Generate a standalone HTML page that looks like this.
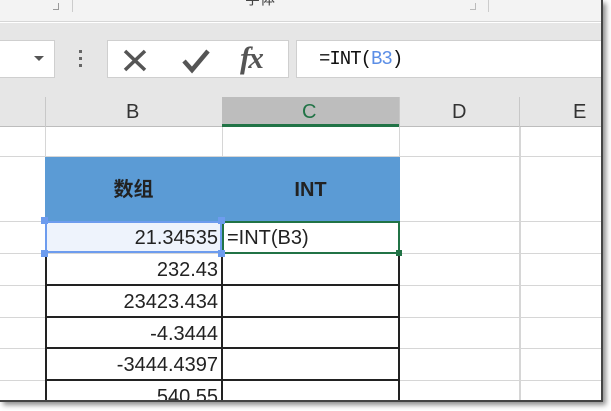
<!DOCTYPE html>
<html><head><meta charset="utf-8"><style>
*{margin:0;padding:0;box-sizing:border-box}
body{width:611px;height:411px;background:#fff;position:relative;overflow:hidden;font-family:"Liberation Sans","Noto Sans CJK SC",sans-serif}
.a{position:absolute;line-height:1.15}
</style></head><body>
<div class="a" style="left:0;top:0;width:603px;height:402px;background:#fff;border-right:2px solid #444;border-bottom:2px solid #444;box-shadow:3px 3px 5px rgba(0,0,0,.45);overflow:hidden">
 <div class="a" style="left:0;top:0;width:603px;height:22px;background:#f3f3f3;border-bottom:1px solid #d6d6d6"></div>
 <div class="a" style="left:245px;top:-9px;font-size:15px;color:#444">字体</div>
 <div class="a" style="left:53px;top:3px;width:6px;height:7px;border-right:1px solid #999;border-bottom:1px solid #999"></div>
 <div class="a" style="left:72px;top:0;width:1px;height:12px;background:#ccc"></div>
 <div class="a" style="left:470px;top:3px;width:6px;height:7px;border-right:1px solid #bbb;border-bottom:1px solid #bbb"></div>
 <div class="a" style="left:488px;top:0;width:1px;height:12px;background:#ccc"></div>
 <div class="a" style="left:0;top:23px;width:603px;height:74px;background:#e6e6e6"></div>
 <div class="a" style="left:0;top:40px;width:55px;height:38px;background:#fff;border:1px solid #cfcfcf;border-left:none"></div>
 <div class="a" style="left:34px;top:56px;width:0;height:0;border-left:5px solid transparent;border-right:5px solid transparent;border-top:5px solid #555"></div>
 <div class="a" style="left:79px;top:50px;width:3px;height:3px;background:#666"></div>
 <div class="a" style="left:79px;top:57px;width:3px;height:3px;background:#666"></div>
 <div class="a" style="left:79px;top:64px;width:3px;height:3px;background:#666"></div>
 <div class="a" style="left:107px;top:40px;width:182px;height:38px;background:#fff;border:1px solid #cfcfcf"></div>
 <svg class="a" style="left:120px;top:46px" width="160" height="30"><path d="M5 5 L25 24 M25 5 L5 24" stroke="#555" stroke-width="3.5" fill="none"/><path d="M64 15 L72 24 L88 5" stroke="#555" stroke-width="4.5" fill="none"/></svg>
 <div class="a" style="left:240px;top:40px;font-family:'Liberation Serif',serif;font-style:italic;font-weight:bold;font-size:31px;color:#555;letter-spacing:-2px">fx</div>
 <div class="a" style="left:296px;top:40px;width:307px;height:38px;background:#fff;border:1px solid #cfcfcf;border-right:none"></div>
 <div class="a" style="left:319px;top:49px;font-family:'Liberation Mono',monospace;font-size:19px;color:#111;letter-spacing:-1px">=INT(<span style="color:#5b8ee6">B3</span>)</div>
 <div class="a" style="left:0;top:97px;width:603px;height:30px;background:#e6e6e6;border-bottom:1px solid #bdbdbd"></div>
 <div class="a" style="left:222px;top:97px;width:177px;height:30px;background:#bdbdbd;border-bottom:3px solid #217346"></div>
 <div class="a" style="left:45px;top:97px;width:1px;height:30px;background:#c8c8c8"></div>
 <div class="a" style="left:399px;top:97px;width:1px;height:30px;background:#c8c8c8"></div>
 <div class="a" style="left:519px;top:97px;width:1px;height:30px;background:#c8c8c8"></div>
 <div class="a" style="left:126px;top:101px;font-size:20px;color:#333">B</div>
 <div class="a" style="left:302px;top:101px;font-size:20px;color:#217346">C</div>
 <div class="a" style="left:452px;top:101px;font-size:20px;color:#333">D</div>
 <div class="a" style="left:573px;top:101px;font-size:20px;color:#333">E</div>
 <div class="a" style="left:45px;top:127px;width:1px;height:280px;background:#d6d6d6"></div>
 <div class="a" style="left:222px;top:127px;width:1px;height:280px;background:#d6d6d6"></div>
 <div class="a" style="left:399px;top:127px;width:1px;height:280px;background:#d6d6d6"></div>
 <div class="a" style="left:519px;top:127px;width:2px;height:280px;background:#d6d6d6"></div>
 <div class="a" style="left:0;top:156px;width:603px;height:1px;background:#d6d6d6"></div>
 <div class="a" style="left:0;top:221px;width:603px;height:1px;background:#d6d6d6"></div>
 <div class="a" style="left:0;top:253px;width:603px;height:1px;background:#d6d6d6"></div>
 <div class="a" style="left:0;top:285px;width:603px;height:1px;background:#d6d6d6"></div>
 <div class="a" style="left:0;top:317px;width:603px;height:1px;background:#d6d6d6"></div>
 <div class="a" style="left:0;top:348px;width:603px;height:1px;background:#d6d6d6"></div>
 <div class="a" style="left:0;top:380px;width:603px;height:1px;background:#d6d6d6"></div>
 <div class="a" style="left:45px;top:157px;width:355px;height:64px;background:#5b9bd5"></div>
 <div class="a" style="left:45px;top:178px;width:177px;height:24px;line-height:24px;text-align:center;font-size:20px;font-weight:bold;color:#222">数组</div>
 <div class="a" style="left:222px;top:178px;width:177px;height:24px;line-height:24px;text-align:center;font-size:20px;font-weight:bold;color:#222">INT</div>
 <div class="a" style="left:45px;top:253px;width:355px;height:150px;border-left:2px solid #222;border-right:2px solid #222"></div>
 <div class="a" style="left:221px;top:253px;width:2px;height:150px;background:#222"></div>
 <div class="a" style="left:45px;top:284px;width:355px;height:2px;background:#222"></div>
 <div class="a" style="left:45px;top:316px;width:355px;height:2px;background:#222"></div>
 <div class="a" style="left:45px;top:347px;width:355px;height:2px;background:#222"></div>
 <div class="a" style="left:45px;top:379px;width:355px;height:2px;background:#222"></div>
 <div class="a" style="left:45px;top:221px;width:177px;height:32px;background:#eef3fc;border:2px solid #6d9cee"></div>
 <div class="a" style="left:222px;top:221px;width:178px;height:33px;border:2px solid #217346"></div>
 <div class="a" style="left:41px;top:217px;width:7px;height:7px;background:#6d9cee"></div>
 <div class="a" style="left:218px;top:217px;width:7px;height:7px;background:#6d9cee"></div>
 <div class="a" style="left:41px;top:250px;width:7px;height:7px;background:#6d9cee"></div>
 <div class="a" style="left:218px;top:250px;width:7px;height:7px;background:#6d9cee"></div>
 <div class="a" style="left:396px;top:250px;width:6px;height:6px;background:#217346"></div>
 <div class="a" style="left:46px;top:227px;width:172px;text-align:right;font-size:20px;color:#222">21.34535</div>
 <div class="a" style="left:227px;top:227px;font-size:20px;color:#222">=INT(B3)</div>
 <div class="a" style="left:46px;top:259px;width:172px;text-align:right;font-size:20px;color:#222">232.43</div>
 <div class="a" style="left:46px;top:291px;width:172px;text-align:right;font-size:20px;color:#222">23423.434</div>
 <div class="a" style="left:46px;top:323px;width:172px;text-align:right;font-size:20px;color:#222">-4.3444</div>
 <div class="a" style="left:46px;top:354px;width:172px;text-align:right;font-size:20px;color:#222">-3444.4397</div>
 <div class="a" style="left:46px;top:386px;width:172px;text-align:right;font-size:20px;color:#222">540.55</div>
</div>
</body></html>
